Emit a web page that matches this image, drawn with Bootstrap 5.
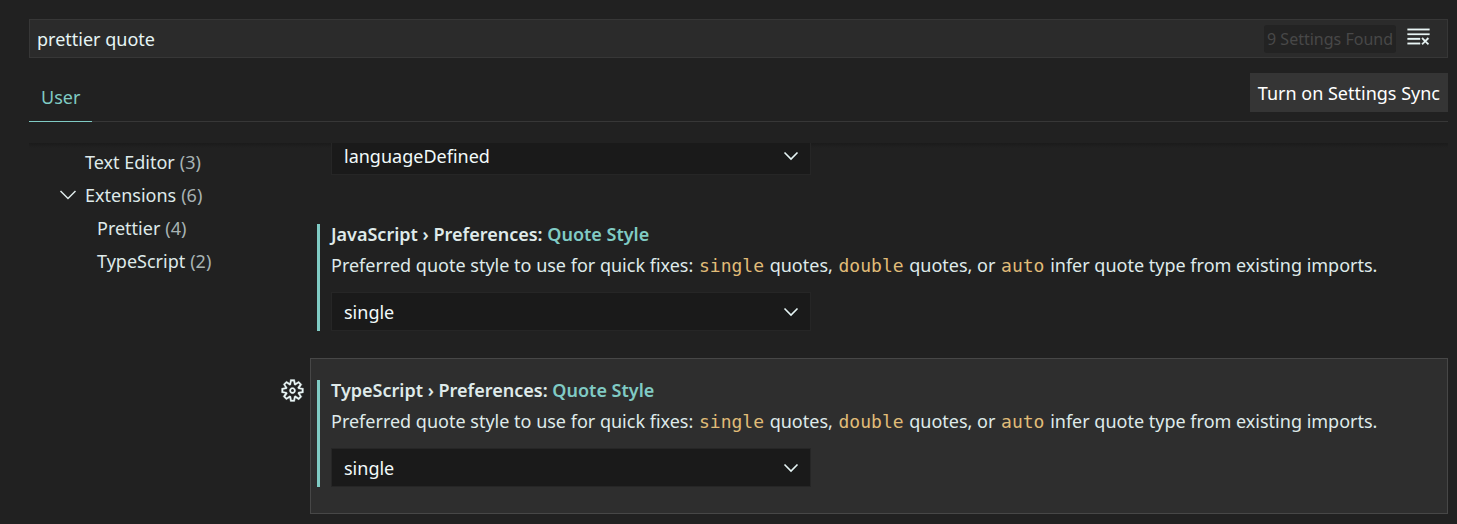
<!DOCTYPE html>
<html lang="en" data-bs-theme="dark">
<head>
<meta charset="utf-8">
<meta name="viewport" content="width=device-width, initial-scale=1">
<title>Settings</title>
<link href="https://cdn.jsdelivr.net/npm/bootstrap@5.3.0/dist/css/bootstrap.min.css" rel="stylesheet">
<style>
  body { background: #212121; color: #dfeaea; font: 18px/26px "Noto Sans", "Open Sans", sans-serif; overflow: hidden; }
  .editor { padding: 19px 9px 9px 29px; }
  .search-box { height: 39px; background: #2b2b2b; border: 1px solid #373737; }
  .search-box input { color: #e6f5f5; font-size: 18px; line-height: 26px; outline: 0; padding: 0 7px; }
  .found-count { background: #232323; color: #484848; font-size: 16px; line-height: 28px; border-radius: 3px; padding: 0 3px; margin-right: 10px; }
  .icon-btn { color: #eaf6f6; line-height: 0; }
  .icon-btn svg { width: 25px; height: 25px; fill: currentColor; stroke: currentColor; stroke-width: .2; }
  .search-box .icon-btn { padding-bottom: 4px; }
  .scope-bar { height: 64px; border-bottom: 1px solid #373737; }
  .scope-tab { height: 49px; padding: 0 12px; color: #80cbc4; border-bottom: 1px solid #80cbc4; line-height: 49px; margin-bottom: -1px; }
  .sync-btn { height: 39px; margin-top: 15px; padding: 0 8px; background: #353535; color: #fff; white-space: nowrap; }
  .settings-body { margin-top: 21px; background: linear-gradient(#1b1b1b, #212121) no-repeat top / 100% 5px; }
  .toc { width: 253px; padding-top: 2px; }
  .toc a { height: 33px; color: #dfeaea; padding-left: 56px; }
  .toc a.child { padding-left: 68px; }
  .toc a.parent { padding-left: 30px; }
  .toc svg { width: 18px; height: 18px; margin-right: 8px; }
  .toc .count { color: #a8b3b3; margin-left: 5px; }
  .gutter { width: 28px; padding-top: 20px; }
  .gutter .icon-btn { display: block; margin-left: -2px; }
  .setting { padding: 21px 6px 26px; border: 1px solid transparent; }
  .setting.focused { background: #2e2e2e; border-color: #474747; }
  .modified { border-left: 3px solid #80cbc4; padding-left: 11px; }
  .setting-title { color: #dfeaea; font-size: 18px; line-height: 21px; font-weight: 600; margin-bottom: 7px; }
  .setting-title span { color: #80cbc4; }
  .setting-desc { line-height: 27px; margin-bottom: 13px; }
  .setting-desc code { color: #e0bc78; font: 18px/26px "DejaVu Sans Mono", monospace; margin: 0 1px; }
  .choice { width: 480px; max-width: 100%; height: 39px; padding: 0 40px 0 12px; font-size: 18px; line-height: 26px; color: #f2fbfb; border: 1px solid #262626; border-radius: 0;
    background: #1a1a1a url("data:image/svg+xml,%3Csvg xmlns='http://www.w3.org/2000/svg' viewBox='0 0 18 18'%3E%3Cpath d='M2.500 5.500 9 12l6.500-6.500' fill='none' stroke='%23e6f5f5' stroke-width='1.600'/%3E%3C/svg%3E") no-repeat right 10px center / 18px 18px; }
  .scrolled-item { height: 32px; overflow: hidden; padding-left: 21px; margin-bottom: 27px; }
</style>
</head>
<body>
<main class="editor">
  <div class="search-box d-flex align-items-center">
    <input class="flex-grow-1 border-0 bg-transparent" type="text" value="prettier quote" aria-label="Search settings">
    <span class="found-count">9 Settings Found</span>
    <button class="icon-btn border-0 bg-transparent px-0 pt-0 me-3" type="button" aria-label="Clear settings search">
      <svg viewBox="0 0 16 16"><path d="M10 12.6l.7.7 1.6-1.6 1.6 1.6.8-.7L13 11l1.700-1.600-.8-.8-1.600 1.700-1.600-1.700-.7.8 1.600 1.600-1.600 1.600zM1 4h14V3H1v1zm0 3h14V6H1v1zm8 2.500V9H1v1h8v-.5zM9 13v-1H1v1h8z"/></svg>
    </button>
  </div>

  <div class="scope-bar d-flex justify-content-between">
    <a class="scope-tab text-decoration-none align-self-end" href="#user">User</a>
    <button class="sync-btn border-0" type="button">Turn on Settings Sync</button>
  </div>

  <div class="settings-body d-flex">
    <nav class="toc flex-shrink-0" aria-label="Settings groups">
      <a class="d-flex align-items-center text-decoration-none" href="#editor">Text Editor <span class="count">(3)</span></a>
      <a class="parent d-flex align-items-center text-decoration-none" href="#extensions"><svg viewBox="0 0 18 18" fill="none" stroke="#dfeaea" stroke-width="1.5"><path d="M1.500 5 9 12.500 16.500 5"/></svg>Extensions <span class="count">(6)</span></a>
      <a class="child d-flex align-items-center text-decoration-none" href="#prettier">Prettier <span class="count">(4)</span></a>
      <a class="child d-flex align-items-center text-decoration-none" href="#typescript">TypeScript <span class="count">(2)</span></a>
    </nav>

    <div class="flex-grow-1">
      <div class="d-flex">
        <div class="gutter flex-shrink-0"></div>
        <div class="scrolled-item flex-grow-1 d-flex align-items-end">
          <select class="choice form-select flex-shrink-0" aria-label="Embedded language formatting"><option>languageDefined</option></select>
        </div>
      </div>

      <div class="d-flex">
        <div class="gutter flex-shrink-0"></div>
        <section class="setting flex-grow-1">
          <div class="modified">
            <h2 class="setting-title">JavaScript › Preferences: <span>Quote Style</span></h2>
            <p class="setting-desc">Preferred quote style to use for quick fixes: <code>single</code> quotes, <code>double</code> quotes, or <code>auto</code> infer quote type from existing imports.</p>
            <select class="choice form-select" aria-label="JavaScript quote style"><option>single</option><option>double</option><option>auto</option></select>
          </div>
        </section>
      </div>

      <div class="d-flex">
        <div class="gutter flex-shrink-0">
          <button class="icon-btn border-0 bg-transparent p-0" type="button" aria-label="More actions">
            <svg viewBox="0 0 16 16"><path fill-rule="evenodd" d="M9.100 4.400L8.600 2H7.400l-.5 2.400-.7.3-2-1.300-.9.8 1.300 2-.2.7-2.400.5v1.200l2.400.5.3.8-1.300 2 .8.8 2-1.300.8.3.4 2.300h1.200l.5-2.400.8-.3 2 1.300.8-.8-1.300-2 .3-.8 2.300-.4V7.400l-2.400-.5-.3-.8 1.300-2-.8-.8-2 1.300-.7-.2zM9.400 1l.5 2.400L12 2.100l2 2-1.400 2.100 2.400.4v2.800l-2.400.5L14 12l-2 2-2.100-1.400-.5 2.400H6.600l-.5-2.400L4 13.900l-2-2 1.400-2.100L1 9.400V6.600l2.400-.5L2.100 4l2-2 2.100 1.400.4-2.400h2.800zm.6 7c0 1.100-.9 2-2 2s-2-.9-2-2 .9-2 2-2 2 .9 2 2zM8 9c.6 0 1-.4 1-1s-.4-1-1-1-1 .4-1 1 .4 1 1 1z"/></svg>
          </button>
        </div>
        <section class="setting focused flex-grow-1">
          <div class="modified">
            <h2 class="setting-title">TypeScript › Preferences: <span>Quote Style</span></h2>
            <p class="setting-desc">Preferred quote style to use for quick fixes: <code>single</code> quotes, <code>double</code> quotes, or <code>auto</code> infer quote type from existing imports.</p>
            <select class="choice form-select" aria-label="TypeScript quote style"><option>single</option><option>double</option><option>auto</option></select>
          </div>
        </section>
      </div>
    </div>
  </div>
</main>
<script src="https://cdn.jsdelivr.net/npm/bootstrap@5.3.0/dist/js/bootstrap.bundle.min.js"></script>
</body>
</html>
